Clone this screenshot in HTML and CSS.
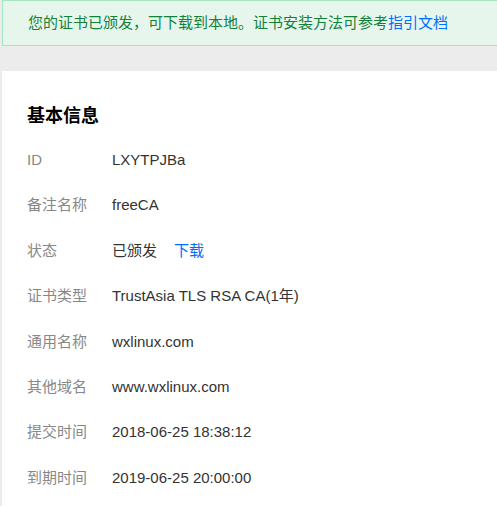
FILE: index.html
```html
<!DOCTYPE html>
<html lang="zh-CN">
<head>
<meta charset="utf-8">
<title>证书详情</title>
<link rel="stylesheet" href="styles.css">
</head>
<body>
<div class="page">
  <div class="alert">您的证书已颁发，可下载到本地。证书安装方法可参考<a class="link" href="#">指引文档</a></div>
  <div class="card">
    <h2 class="title">基本信息</h2>
    <div class="rows">
      <div class="row"><span class="label">ID</span><span class="value">LXYTPJBa</span></div>
      <div class="row"><span class="label">备注名称</span><span class="value">freeCA</span></div>
      <div class="row"><span class="label">状态</span><span class="value">已颁发<a class="link action" href="#">下载</a></span></div>
      <div class="row"><span class="label">证书类型</span><span class="value">TrustAsia TLS RSA CA(1年)</span></div>
      <div class="row"><span class="label">通用名称</span><span class="value">wxlinux.com</span></div>
      <div class="row"><span class="label">其他域名</span><span class="value">www.wxlinux.com</span></div>
      <div class="row"><span class="label">提交时间</span><span class="value">2018-06-25 18:38:12</span></div>
      <div class="row"><span class="label">到期时间</span><span class="value">2019-06-25 20:00:00</span></div>
    </div>
  </div>
</div>
</body>
</html>
```
FILE: styles.css
```css
html, body {
  margin: 0;
  padding: 0;
  background: #ececec;
}
body {
  font-family: "Liberation Sans", "Noto Sans CJK SC", sans-serif;
  font-size: 15px;
  color: #333;
}
.page {
  padding-left: 2px;
  height: 100vh;
  box-sizing: border-box;
  display: flex;
  flex-direction: column;
  overflow: hidden;
}
.alert {
  flex: none;
  height: 44px;
  line-height: 44px;
  border: 1px solid #a9e4c1;
  border-right: none;
  background: #e6f6ec;
  color: #12813a;
  padding-left: 25px;
  white-space: nowrap;
}
.link {
  color: #006eff;
  text-decoration: none;
}
.card {
  flex: 1;
  margin-top: 25px;
  background: #fff;
  padding: 33px 0 0 25px;
  min-height: 0;
}
.title {
  margin: 0;
  font-size: 18px;
  line-height: 24px;
  font-weight: bold;
  color: #000;
}
.rows {
  display: flex;
  flex-direction: column;
  padding-top: 22px;
  gap: 25.4px;
}
.row {
  display: flex;
  line-height: 20px;
}
.label {
  width: 85px;
  color: #888;
}
.value {
  color: #333;
}
.action {
  margin-left: 17px;
}
```
